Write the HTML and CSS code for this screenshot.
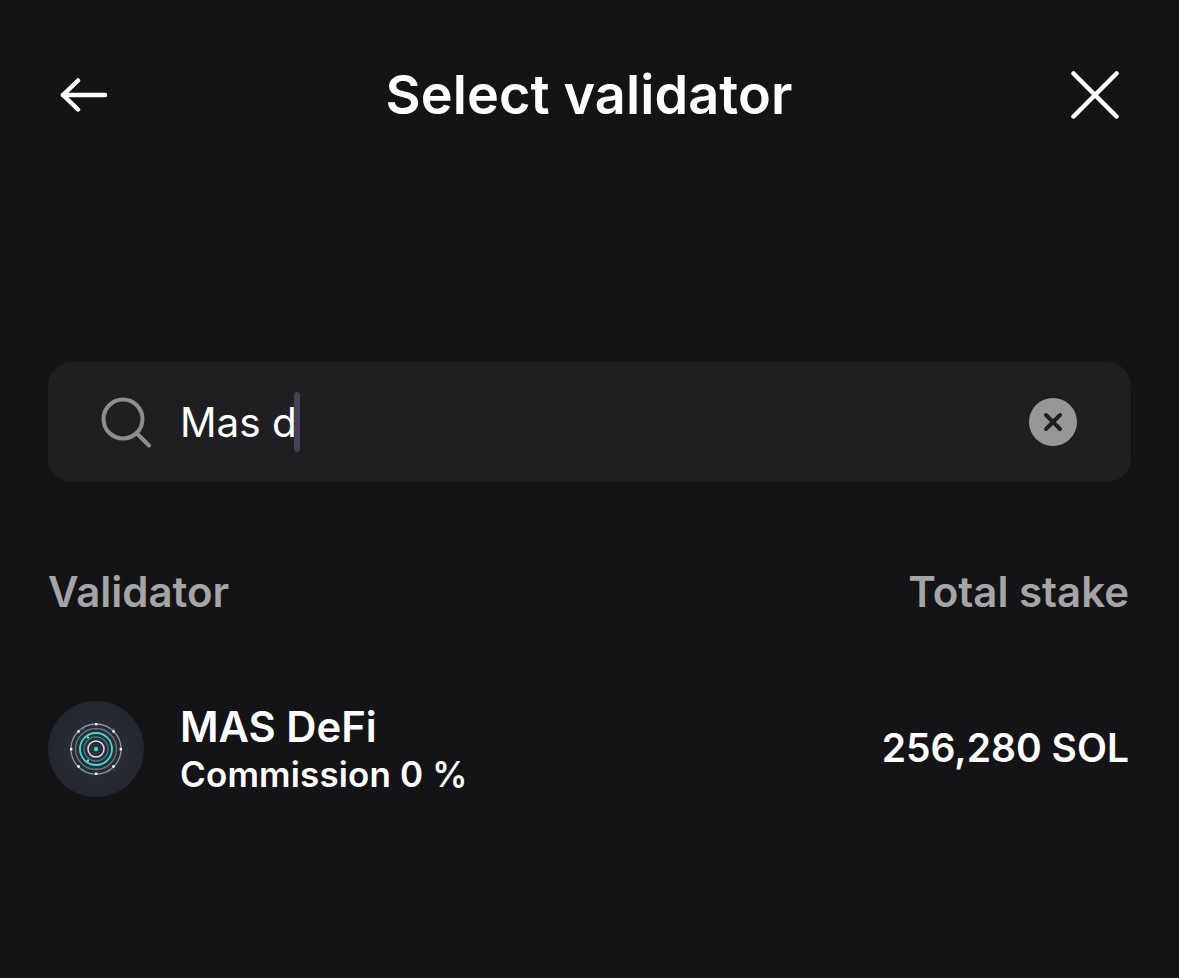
FILE: index.html
```html
<!DOCTYPE html>
<html lang="en">
<head>
  <meta charset="UTF-8" />
  <title>Select validator</title>
  <link rel="stylesheet" href="styles.css">
</head>
<body>

  <div class="header">
    <button class="icon-btn" aria-label="Back">
      <svg width="48" height="48" viewBox="0 0 48 48" fill="none" stroke="#fff" stroke-width="4.5" stroke-linecap="round" stroke-linejoin="round">
        <path d="M3 24H45"/>
        <path d="M18 9.500L3 24L18 38.500"/>
      </svg>
    </button>
    <h1>Select validator</h1>
    <button class="icon-btn" aria-label="Close">
      <svg width="48" height="48" viewBox="0 0 48 48" fill="none" stroke="#fff" stroke-width="4.5" stroke-linecap="round">
        <path d="M2.500 2.500L45.500 45.500"/>
        <path d="M45.500 2.500L2.500 45.500"/>
      </svg>
    </button>
  </div>

  <div class="search">
    <svg class="search-icon" width="50" height="52" viewBox="0 0 50 52" fill="none" stroke="#8e8e8e" stroke-width="4" stroke-linecap="round">
      <circle cx="22" cy="23" r="19.500"/>
      <path d="M36 37.500L48 49.500"/>
    </svg>
    <div class="query"><span class="typed">Mas d</span><span class="caret"></span></div>
    <button class="clear" aria-label="Clear">
      <svg width="48" height="48" viewBox="0 0 48 48" fill="none" stroke="#1f1f21" stroke-width="4" stroke-linecap="round">
        <path d="M17 17L31 31"/>
        <path d="M31 17L17 31"/>
      </svg>
    </button>
  </div>

  <div class="columns">
    <span>Validator</span>
    <span>Total stake</span>
  </div>

  <div class="validator">
    <div class="avatar">
      <svg width="96" height="96" viewBox="0 0 96 96" fill="none">
        <circle cx="48" cy="48" r="25" stroke="#8f959c" stroke-width="1.300"/>
        <circle cx="48" cy="48" r="20.500" stroke="#6f767d" stroke-width="1.300"/>
        <circle cx="48" cy="48" r="16" stroke="#3be0d2" stroke-width="1.800"/>
        <circle cx="48" cy="48" r="12" stroke="#3d7f85" stroke-width="1.300"/>
        <circle cx="48" cy="48" r="8" stroke="#dfe3e5" stroke-width="1.500"/>
        <circle cx="48" cy="48" r="2.200" fill="#1fe6d6"/>
        <g fill="#f2f4f5">
          <rect x="47" y="22" width="2.400" height="2.400"/>
          <rect x="47" y="71.600" width="2.400" height="2.400"/>
          <rect x="22" y="47" width="2.400" height="2.400"/>
          <rect x="71.600" y="47" width="2.400" height="2.400"/>
          <circle cx="30.500" cy="30.500" r="1.400"/>
          <circle cx="65.500" cy="30.500" r="1.400"/>
          <circle cx="30.500" cy="65.500" r="1.400"/>
          <circle cx="65.500" cy="65.500" r="1.400"/>
          <circle cx="40" cy="36.500" r="1"/>
          <circle cx="40" cy="59.500" r="1"/>
        </g>
        <g fill="#1f9f98">
          <circle cx="35.500" cy="28" r="0.800"/>
          <circle cx="66" cy="28" r="0.800"/>
          <circle cx="35.500" cy="69" r="0.800"/>
          <circle cx="66" cy="69" r="0.800"/>
          <circle cx="48" cy="28" r="0.800"/>
          <circle cx="48" cy="68" r="0.800"/>
        </g>
      </svg>
    </div>
    <div class="info">
      <div class="name">MAS DeFi</div>
      <div class="commission">Commission 0 %</div>
    </div>
    <div class="stake">256,280 SOL</div>
  </div>

</body>
</html>
```

FILE: styles.css
```css
* {
  box-sizing: border-box;
}

body {
  margin: 0;
  height: 978px;
  padding: 71px 48px 0;
  font-family: 'Inter', sans-serif;
  background: #141416;
  color: #fff;
  overflow: hidden;
}

button {
  padding: 0;
  border: none;
  background: none;
}

svg {
  display: block;
}

.header {
  display: flex;
  justify-content: space-between;
  align-items: center;
  height: 48px;
  padding: 0 12px;
}

h1 {
  margin: 0 1px 0 0;
  font-size: 54px;
  font-weight: 600;
  line-height: 48px;
  letter-spacing: 0.1px;
}

.icon-btn {
  width: 48px;
  height: 48px;
}

.search {
  display: flex;
  align-items: center;
  height: 120px;
  margin-top: 243px;
  padding: 0 54px 0 53px;
  background: #1f1f21;
  border-radius: 24px;
}

.search-icon {
  flex: none;
}

.query {
  display: flex;
  align-items: center;
  margin-left: 29px;
  font-size: 40.5px;
  line-height: 60px;
}

.typed {
  padding-top: 2px;
}

.caret {
  width: 6px;
  height: 60px;
  margin-left: -3px;
  background: #474059;
  border-radius: 3px;
}

.clear {
  width: 48px;
  height: 48px;
  margin-left: auto;
  background: #979799;
  border-radius: 50%;
}

.columns {
  display: flex;
  justify-content: space-between;
  margin-top: 86px;
  padding-right: 2px;
  font-size: 42px;
  font-weight: 600;
  line-height: 48px;
  color: #a5a5a6;
}

.validator {
  display: flex;
  align-items: center;
  margin-top: 85px;
}

.avatar {
  width: 96px;
  height: 96px;
  background: radial-gradient(circle, #2b303a, #20242b);
  border-radius: 50%;
}

.info {
  margin-top: -2px;
  margin-left: 36px;
  font-weight: 600;
}

.name {
  font-size: 41.8px;
  line-height: 52px;
}

.commission {
  font-size: 35px;
  line-height: 43px;
  letter-spacing: 0.15px;
}

.stake {
  margin-left: auto;
  margin-top: -3px;
  padding-right: 2px;
  font-size: 39px;
  font-weight: 600;
}
```
